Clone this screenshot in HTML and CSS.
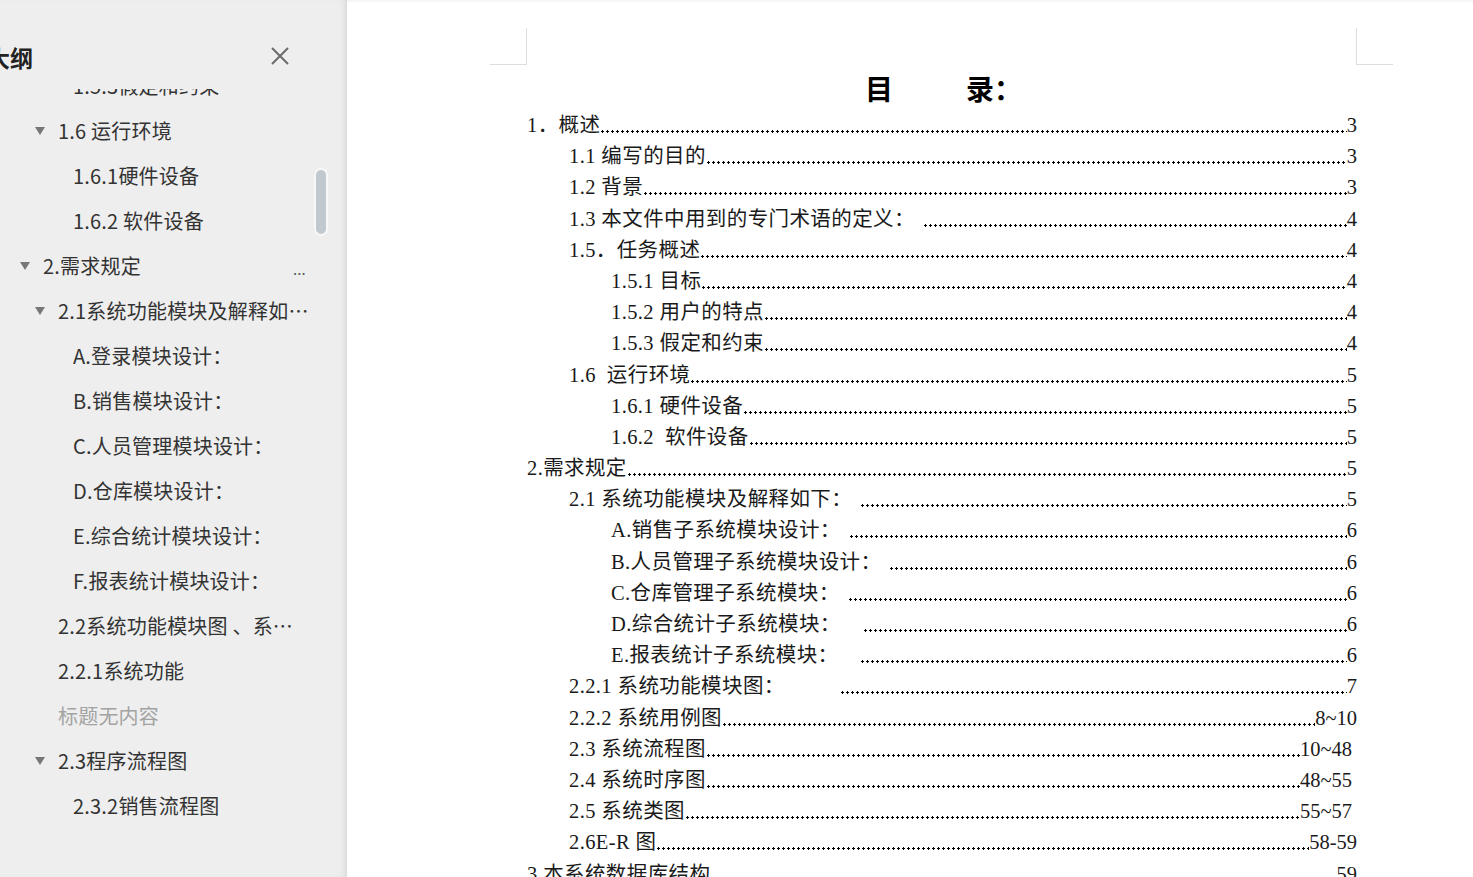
FILE: index.html
```html
<!DOCTYPE html>
<html>
<head>
<meta charset="utf-8">
<title>目录</title>
<link rel="stylesheet" href="styles.css">
</head>
<body>

<div class="outline">
  <div class="outline-head">
    <div class="outline-title">大纲</div>
    <svg class="close" width="20" height="20" viewBox="0 0 20 20"><path d="M2 2 L18 18 M18 2 L2 18" stroke="#6b6b6b" stroke-width="2" fill="none"/></svg>
  </div>
  <div class="outline-list">
    <div class="items">
      <div class="item lv3"><span class="arr none"></span><span class="label">1.5.3假定和约束</span></div>
      <div class="item lv2"><span class="arr"></span><span class="label">1.6 运行环境</span></div>
      <div class="item lv3"><span class="arr none"></span><span class="label">1.6.1硬件设备</span></div>
      <div class="item lv3"><span class="arr none"></span><span class="label">1.6.2 软件设备</span></div>
      <div class="item lv1"><span class="arr"></span><span class="label">2.需求规定</span><span class="more">...</span></div>
      <div class="item lv2"><span class="arr"></span><span class="label">2.1系统功能模块及解释如下：</span></div>
      <div class="item lv3"><span class="arr none"></span><span class="label">A.登录模块设计：</span></div>
      <div class="item lv3"><span class="arr none"></span><span class="label">B.销售模块设计：</span></div>
      <div class="item lv3"><span class="arr none"></span><span class="label">C.人员管理模块设计：</span></div>
      <div class="item lv3"><span class="arr none"></span><span class="label">D.仓库模块设计：</span></div>
      <div class="item lv3"><span class="arr none"></span><span class="label">E.综合统计模块设计：</span></div>
      <div class="item lv3"><span class="arr none"></span><span class="label">F.报表统计模块设计：</span></div>
      <div class="item lv2"><span class="arr none"></span><span class="label">2.2系统功能模块图 、系统用例图</span></div>
      <div class="item lv2"><span class="arr none"></span><span class="label">2.2.1系统功能</span></div>
      <div class="item lv2 empty"><span class="arr none"></span><span class="label">标题无内容</span></div>
      <div class="item lv2"><span class="arr"></span><span class="label">2.3程序流程图</span></div>
      <div class="item lv3"><span class="arr none"></span><span class="label">2.3.2销售流程图</span></div>
    </div>
  </div>
  <div class="scroll-thumb"></div>
</div>

<div class="doc">
  <div class="page">
    <div class="corners"><span class="corner left"></span><span class="corner right"></span></div>
    <div class="toc">
      <div class="toc-title">目<span class="title-gap"></span>录：</div>

      <div class="row l1"><span class="t">1．概述</span><span class="dots"></span><span class="pg">3</span></div>
      <div class="row l2"><span class="t">1.1 编写的目的</span><span class="dots"></span><span class="pg">3</span></div>
      <div class="row l2"><span class="t">1.2 背景</span><span class="dots"></span><span class="pg">3</span></div>
      <div class="row l2"><span class="t">1.3 本文件中用到的专门术语的定义：</span><span class="dots sp"></span><span class="pg">4</span></div>
      <div class="row l2"><span class="t">1.5．任务概述</span><span class="dots"></span><span class="pg">4</span></div>
      <div class="row l3"><span class="t">1.5.1 目标</span><span class="dots"></span><span class="pg">4</span></div>
      <div class="row l3"><span class="t">1.5.2 用户的特点</span><span class="dots"></span><span class="pg">4</span></div>
      <div class="row l3"><span class="t">1.5.3 假定和约束</span><span class="dots"></span><span class="pg">4</span></div>
      <div class="row l2"><span class="t">1.6&nbsp;&nbsp;运行环境</span><span class="dots"></span><span class="pg">5</span></div>
      <div class="row l3"><span class="t">1.6.1 硬件设备</span><span class="dots"></span><span class="pg">5</span></div>
      <div class="row l3"><span class="t">1.6.2&nbsp;&nbsp;软件设备</span><span class="dots"></span><span class="pg">5</span></div>
      <div class="row l1"><span class="t">2.需求规定</span><span class="dots"></span><span class="pg">5</span></div>
      <div class="row l2"><span class="t">2.1 系统功能模块及解释如下：</span><span class="dots sp"></span><span class="pg">5</span></div>
      <div class="row l3"><span class="t">A.销售子系统模块设计：</span><span class="dots sp"></span><span class="pg">6</span></div>
      <div class="row l3"><span class="t">B.人员管理子系统模块设计：</span><span class="dots sp"></span><span class="pg">6</span></div>
      <div class="row l3"><span class="t">C.仓库管理子系统模块：</span><span class="dots sp"></span><span class="pg">6</span></div>
      <div class="row l3"><span class="t">D.综合统计子系统模块：</span><span class="dots tab"></span><span class="pg">6</span></div>
      <div class="row l3"><span class="t">E.报表统计子系统模块：</span><span class="dots tab"></span><span class="pg">6</span></div>
      <div class="row l2"><span class="t">2.2.1 系统功能模块图：</span><span class="dots wide"></span><span class="pg">7</span></div>
      <div class="row l2"><span class="t">2.2.2 系统用例图</span><span class="dots"></span><span class="pg">8~10</span></div>
      <div class="row l2"><span class="t">2.3 系统流程图</span><span class="dots"></span><span class="pg short">10~48</span></div>
      <div class="row l2"><span class="t">2.4 系统时序图</span><span class="dots"></span><span class="pg short">48~55</span></div>
      <div class="row l2"><span class="t">2.5 系统类图</span><span class="dots"></span><span class="pg short">55~57</span></div>
      <div class="row l2"><span class="t">2.6E-R 图</span><span class="dots"></span><span class="pg">58-59</span></div>
      <div class="row l1"><span class="t">3 本系统数据库结构</span><span class="dots"></span><span class="pg">59</span></div>
    </div>
  </div>
</div>

</body>
</html>
```

FILE: styles.css
```css
body {
  margin: 0;
  display: flex;
  height: 877px;
  overflow: hidden;
  background: #fff;
}

/* left outline panel */
.outline {
  position: relative;
  width: 347px;
  height: 877px;
  flex-shrink: 0;
  background-color: #eeeeee;
  box-shadow: inset -6px 0 6px -4px rgba(0, 0, 0, 0.1);
  font-family: "Noto Sans CJK SC", "Open Sans", sans-serif;
  color: #333;
  overflow: hidden;
}

.outline-head {
  height: 89px;
  display: flex;
  justify-content: space-between;
  align-items: flex-start;
  padding-top: 42px;
  box-sizing: border-box;
}

.outline-title {
  margin-left: -13px;
  font-size: 23px;
  font-weight: bold;
  line-height: 30px;
  color: #222;
}

.close {
  margin-top: 4px;
  margin-right: 57px;
}

.outline-list {
  height: 788px;
  overflow: hidden;
}

.items {
  margin-top: -26px;
}

.item {
  display: flex;
  align-items: center;
  height: 45px;
  padding-right: 35px;
  font-size: 20px;
  letter-spacing: 0.2px;
}

.lv1 { padding-left: 20px; }
.lv2 { padding-left: 35px; }
.lv3 { padding-left: 50px; }

.arr {
  width: 0;
  height: 0;
  border-left: 5px solid transparent;
  border-right: 5px solid transparent;
  border-top: 8px solid #777;
  margin-right: 13px;
  flex-shrink: 0;
}

.arr.none {
  border-top-color: transparent;
}

.label {
  white-space: nowrap;
  overflow: hidden;
  text-overflow: ellipsis;
  min-width: 0;
}

.empty .label {
  color: #a3a3a3;
}

.more {
  margin-left: auto;
  margin-right: 6px;
  font-size: 15px;
  color: #555;
  padding-top: 6px;
}

.scroll-thumb {
  position: absolute;
  left: 314px;
  top: 168px;
  width: 10px;
  height: 64px;
  border: 2px solid #f7f7f7;
  border-radius: 7px;
  background: #c2c8d0;
}

/* document page */
.doc {
  flex: 1;
  background: #fff;
  box-shadow: inset 0 3px 3px -2px rgba(0, 0, 0, 0.07);
  overflow: hidden;
}

.page {
  margin-left: 143px;
  width: 903px;
  padding-top: 28px;
}

.corners {
  display: flex;
  justify-content: space-between;
  height: 36px;
}

.corner {
  width: 36px;
  height: 36px;
  border-bottom: 1px solid #dedede;
}

.corner.left { border-right: 1px solid #dedede; }
.corner.right { border-left: 1px solid #dedede; }

.toc {
  margin-left: 37px;
  width: 830px;
  font-family: "Liberation Serif", "Noto Sans CJK SC", serif;
  color: #1a1a1a;
}

.toc-title {
  padding-top: 8px;
  padding-left: 338px;
  line-height: 38px;
  font-size: 28px;
  font-weight: bold;
  color: #000;
}

.title-gap {
  display: inline-block;
  width: 73px;
}

.row {
  display: flex;
  height: 31.2px;
  line-height: 31.2px;
  font-size: 20.5px;
  white-space: nowrap;
}

.row .t {
  letter-spacing: 0.4px;
}

.l1 { padding-left: 0; }
.l2 { padding-left: 42px; }
.l3 { padding-left: 84px; }

.dots {
  flex: 1;
  background-image: radial-gradient(circle, #000 1px, transparent 1.4px);
  background-size: 5px 3px;
  background-repeat: repeat-x;
  background-position: 0 20px;
}

.dots.sp { margin-left: 8px; }
.dots.tab { margin-left: 22px; }
.dots.wide { margin-left: 55px; }

.pg.short { margin-right: 5px; }
```
